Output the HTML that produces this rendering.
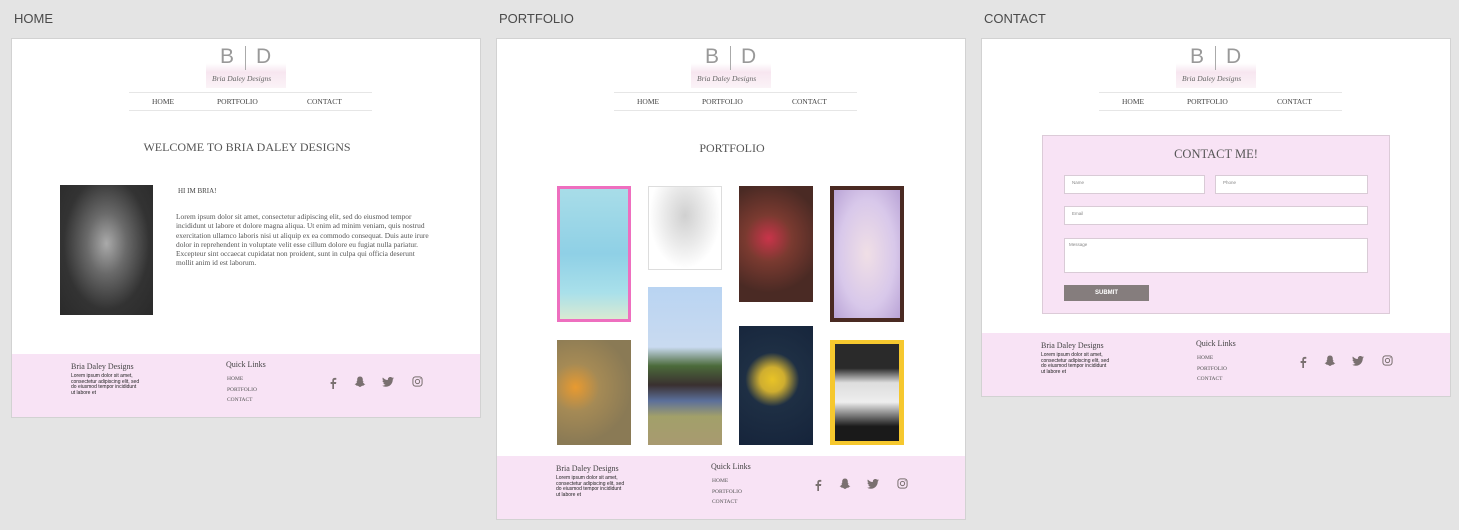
<!DOCTYPE html>
<html><head><meta charset="utf-8"><style>
*{margin:0;padding:0;box-sizing:border-box}
body{width:1459px;height:530px;background:#e4e4e4;position:relative;overflow:hidden;font-family:"Liberation Serif",serif;color:#555}
.lbl{position:absolute;top:11px;font-family:"Liberation Sans",sans-serif;font-size:13px;color:#4a4a4a}
.ab{position:absolute;top:38px;width:470px;background:#fff;border:1px solid #d2d2d2}
.a{position:absolute}
.logo{left:194px;top:4px;width:80px;height:45px;background:linear-gradient(180deg,#fff 0%,#fff 45%,#f7e6f0 65%,#fbf3f7 100%)}
.logo .B{position:absolute;left:14px;top:2px;font-family:"Liberation Sans",sans-serif;font-size:21px;color:#999}
.logo .D{position:absolute;left:50px;top:2px;font-family:"Liberation Sans",sans-serif;font-size:21px;color:#999}
.logo .bar{position:absolute;left:39px;top:3px;width:1px;height:24px;background:#aaa}
.logo .s{position:absolute;left:6px;top:31px;font-style:italic;font-size:7.5px;color:#666;white-space:nowrap}
.nav{left:117px;top:53px;width:243px;height:19px;border-top:1px solid #e6e6e6;border-bottom:1px solid #e6e6e6;font-size:7.5px;color:#444}
.nav span{position:absolute;top:4px}
.h{font-size:12px;color:#555;text-align:center;width:470px;left:0}
.ft{left:0;width:468px;height:63px;background:#f8e3f5}
.ft .t{position:absolute;left:59px;top:8px;font-size:8px;color:#444}
.ft .p{position:absolute;left:59px;top:20px;font-size:5px;line-height:5.5px;color:#222;width:70px;font-family:"Liberation Sans",sans-serif}
.ft .q{position:absolute;left:214px;top:6px;font-size:8px;color:#444}
.ft .l{position:absolute;left:215px;font-size:5.5px;color:#555}
.ic{position:absolute;top:23px}
.in{position:absolute;height:19px;background:#fff;border:1px solid #d9cbd6;font-family:"Liberation Sans",sans-serif;font-size:4.5px;color:#888;padding:4px 7px}
</style></head><body>
<div class="lbl" style="left:14px">HOME</div>
<div class="lbl" style="left:499px">PORTFOLIO</div>
<div class="lbl" style="left:984px">CONTACT</div>

<div class="ab" style="left:11px;height:380px">
 <div class="a logo"><span class="B">B</span><span class="bar"></span><span class="D">D</span><span class="s">Bria Daley Designs</span></div>
 <div class="a nav"><span style="left:23px">HOME</span><span style="left:88px">PORTFOLIO</span><span style="left:178px">CONTACT</span></div>
 <div class="a h" style="top:101px">WELCOME TO BRIA DALEY DESIGNS</div>
 <div class="a" style="left:48px;top:146px;width:93px;height:130px;background:radial-gradient(ellipse at 50% 45%,#aaa 0%,#6a6a6a 30%,#333 65%,#2a2a2a 100%)"></div>
 <div class="a" style="left:166px;top:148px;font-size:7px;color:#444">HI IM BRIA!</div>
 <div class="a" style="left:164px;top:173px;width:258px;font-size:7.4px;line-height:9.3px;color:#555">Lorem ipsum dolor sit amet, consectetur adipiscing elit, sed do eiusmod tempor incididunt ut labore et dolore magna aliqua. Ut enim ad minim veniam, quis nostrud exercitation ullamco laboris nisi ut aliquip ex ea commodo consequat. Duis aute irure dolor in reprehendent in voluptate velit esse cillum dolore eu fugiat nulla pariatur. Excepteur sint occaecat cupidatat non proident, sunt in culpa qui officia deserunt mollit anim id est laborum.</div>
 <div class="a ft" style="top:315px"></div>
</div>

<div class="ab" style="left:496px;height:482px">
 <div class="a logo"><span class="B">B</span><span class="bar"></span><span class="D">D</span><span class="s">Bria Daley Designs</span></div>
 <div class="a nav"><span style="left:23px">HOME</span><span style="left:88px">PORTFOLIO</span><span style="left:178px">CONTACT</span></div>
 <div class="a h" style="top:102px">PORTFOLIO</div>
 <div class="a" style="left:60px;top:147px;width:74px;height:136px;background:#ee6fbf;padding:3px"><div style="width:100%;height:100%;background:linear-gradient(180deg,#a8dde8 0%,#8fd0e6 50%,#a9e0ea 80%,#d9ead2 100%)"></div></div>
 <div class="a" style="left:151px;top:147px;width:74px;height:84px;background:radial-gradient(ellipse at 50% 35%,#d0d0d0 0%,#eaeaea 40%,#fff 70%);border:1px solid #ddd"></div>
 <div class="a" style="left:242px;top:147px;width:74px;height:116px;background:radial-gradient(circle at 40% 45%,#c9344a 0%,#7a3a30 30%,#4a2a24 70%)"></div>
 <div class="a" style="left:333px;top:147px;width:74px;height:136px;background:#4a2a22;padding:4px"><div style="width:100%;height:100%;background:radial-gradient(ellipse at 50% 50%,#f0dfe6 0%,#d8c8ea 60%,#b9a3d6 100%)"></div></div>
 <div class="a" style="left:60px;top:301px;width:74px;height:105px;background:radial-gradient(circle at 25% 45%,#e89a30 0%,#a58a55 30%,#8a7a55 70%)"></div>
 <div class="a" style="left:151px;top:248px;width:74px;height:158px;background:linear-gradient(180deg,#b9d4f2 0%,#c9daf0 38%,#4b6a3a 50%,#3a3030 62%,#5b6f9a 72%,#a2a06a 82%,#a89a70 100%)"></div>
 <div class="a" style="left:242px;top:287px;width:74px;height:119px;background:radial-gradient(circle at 45% 45%,#e8c326 0%,#cfae30 16%,#1e2f44 35%,#15233a 100%)"></div>
 <div class="a" style="left:333px;top:301px;width:74px;height:105px;background:#f6c82e;padding:4px 5px"><div style="width:100%;height:100%;background:linear-gradient(180deg,#2a2a2a 0%,#2a2a2a 25%,#ddd 40%,#eee 60%,#1a1a1a 85%)"></div></div>
 <div class="a ft" style="top:417px"></div>
</div>

<div class="ab" style="left:981px;height:359px">
 <div class="a logo"><span class="B">B</span><span class="bar"></span><span class="D">D</span><span class="s">Bria Daley Designs</span></div>
 <div class="a nav"><span style="left:23px">HOME</span><span style="left:88px">PORTFOLIO</span><span style="left:178px">CONTACT</span></div>
 <div class="a" style="left:60px;top:96px;width:348px;height:179px;background:#f8e3f5;border:1px solid #dccbd8">
  <div class="a" style="top:11px;left:0;width:346px;text-align:center;font-size:12.5px;color:#555">CONTACT ME!</div>
  <div class="in" style="left:21px;top:39px;width:141px">Name</div>
  <div class="in" style="left:172px;top:39px;width:153px">Phone</div>
  <div class="in" style="left:21px;top:70px;width:304px">Email</div>
  <div class="in" style="left:21px;top:102px;width:304px;height:35px;padding:3px 4px">Message</div>
  <div class="a" style="left:21px;top:149px;width:85px;height:16px;background:#857d7d;color:#fff;font-family:'Liberation Sans',sans-serif;font-weight:bold;font-size:6px;text-align:center;line-height:16px">SUBMIT</div>
 </div>
 <div class="a ft" style="top:294px"></div>
</div>

<script>
var html='<div class="t">Bria Daley Designs</div><div class="p">Lorem ipsum dolor sit amet, consectetur adipiscing elit, sed do eiusmod tempor incididunt ut labore et</div><div class="q">Quick Links</div><div class="l" style="top:22px">HOME</div><div class="l" style="top:33px">PORTFOLIO</div><div class="l" style="top:43px">CONTACT</div>'+
'<svg class="ic" style="left:317px" width="8" height="12" viewBox="0 0 8 12"><path d="M5 12V7h2l.3-2H5V3.8c0-.6.2-1 1-1h1.3V1C7 .9 6.4.9 5.8.9 4.3.9 3.3 1.8 3.3 3.4V5H1.6v2h1.7v5z" fill="#7a7070"/></svg>'+
'<svg class="ic" style="left:342px;top:22px" width="12" height="12" viewBox="0 0 12 12"><path d="M6 .5C4 .5 3.2 2 3.2 3.5v1.4l-1 .2.9.7C2.6 7.2 1.6 8 .6 8.3c.6.5 1.4.4 1.6.9.3.6.9.5 1.6.6.7.1 1.2 1.2 2.2 1.2s1.5-1.1 2.2-1.2c.7-.1 1.3 0 1.6-.6.2-.5 1-.4 1.6-.9-1-.3-2-1.1-2.5-2.2l.9-.7-1-.2V3.5C8.8 2 8 .5 6 .5z" fill="#7a7070"/></svg>'+
'<svg class="ic" style="left:370px;top:23px" width="12" height="10" viewBox="0 0 24 20"><path d="M24 2.4a9.8 9.8 0 0 1-2.8.8A4.9 4.9 0 0 0 23.3.4a9.9 9.9 0 0 1-3.1 1.2A4.9 4.9 0 0 0 11.8 6 14 14 0 0 1 1.7.9a4.9 4.9 0 0 0 1.5 6.6A4.9 4.9 0 0 1 1 6.9v.1a4.9 4.9 0 0 0 3.9 4.8 4.9 4.9 0 0 1-2.2.1 4.9 4.9 0 0 0 4.6 3.4A9.9 9.9 0 0 1 0 17.3 14 14 0 0 0 7.5 19.5c9.1 0 14-7.5 14-14v-.6A10 10 0 0 0 24 2.4z" fill="#7a7070"/></svg>'+
'<svg class="ic" style="left:400px;top:22px" width="11" height="11" viewBox="0 0 12 12"><rect x="1" y="1" width="10" height="10" rx="2.8" fill="none" stroke="#7a7070" stroke-width="1.1"/><circle cx="6" cy="6" r="2.3" fill="none" stroke="#7a7070" stroke-width="1.1"/><circle cx="9" cy="3" r=".6" fill="#7a7070"/></svg>';
document.querySelectorAll('.ft').forEach(function(e){e.innerHTML=html});
</script>
</body></html>
